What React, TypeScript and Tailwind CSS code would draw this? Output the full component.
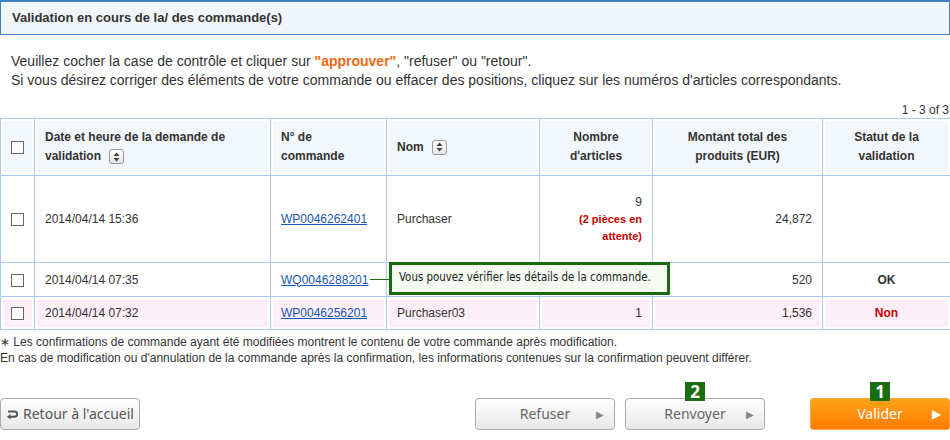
import React from 'react';

const font = { fontFamily: '"Liberation Sans", Arial, sans-serif' };

function Box() {
  return <span className="inline-block w-[13px] h-[13px] border border-[#666] bg-white align-middle" />;
}

function SortIcon() {
  return (
    <span className="inline-flex w-[15px] h-[15px] border border-[#999] rounded-[3px] bg-gradient-to-b from-white to-[#e6e6e6] items-center justify-center align-middle ml-2">
      <svg width="7" height="10" viewBox="0 0 7 10">
        <path d="M3.5 0.5 L6.5 4 L0.5 4 Z" fill="#444" />
        <path d="M3.5 9.5 L6.5 6 L0.5 6 Z" fill="#444" />
      </svg>
    </span>
  );
}

function Badge({ n }: { n: string }) {
  return (
    <span className="absolute -top-[17px] w-[20px] h-[19px] bg-[#1b6e10] text-white text-[17px] font-bold leading-[19px] text-center">
      {n}
    </span>
  );
}

const th = 'border border-[#a9cbec] bg-[#f2f7fb] shadow-[inset_0_0_0_2px_#fff] text-[12px] font-bold text-[#333] leading-[19px]';
const td = 'border border-[#a9cbec] text-[12px] text-[#333]';
const tdPink = 'border border-[#a9cbec] bg-[#fcefF8] shadow-[inset_0_0_0_2px_#fff] text-[12px] text-[#333]';
const link = 'text-[#1a56b8] underline';

export default function App() {
  return (
    <div className="w-[950px] h-[440px] bg-white relative" style={font}>
      <div className="border border-[#3f80c6] border-t-2 bg-[#f1f6fb] h-[35px] flex items-center px-[11px]">
        <h1 className="text-[13px] font-bold text-[#333]">Validation en cours de la/ des commande(s)</h1>
      </div>

      <div className="px-[11px] pt-[17px] text-[14px] text-[#333] leading-[19px]">
        <p>
          Veuillez cocher la case de contrôle et cliquer sur{' '}
          <span className="font-bold text-[#ee6a10]">"approuver"</span>, "refuser" ou "retour".
        </p>
        <p>Si vous désirez corriger des éléments de votre commande ou effacer des positions, cliquez sur les numéros d'articles correspondants.</p>
      </div>

      <div className="text-right text-[12px] text-[#333] pr-[1px] mt-[13px] leading-[14px]">1 - 3 of 3</div>

      <table className="w-[950px] border-collapse mt-[1px] table-fixed">
        <colgroup>
          <col className="w-[34px]" />
          <col className="w-[236px]" />
          <col className="w-[116px]" />
          <col className="w-[153px]" />
          <col className="w-[113px]" />
          <col className="w-[170px]" />
          <col className="w-[128px]" />
        </colgroup>
        <thead>
          <tr className="h-[57px]">
            <th className={`${th} text-center`}><Box /></th>
            <th className={`${th} text-left px-[10px]`}>
              Date et heure de la demande de validation
              <SortIcon />
            </th>
            <th className={`${th} text-left px-[10px]`}>N° de commande</th>
            <th className={`${th} text-left px-[10px]`}>
              Nom
              <SortIcon />
            </th>
            <th className={`${th} text-center px-[10px]`}>Nombre d'articles</th>
            <th className={`${th} text-center px-[16px]`}>
              Montant total des produits (EUR)
            </th>
            <th className={`${th} text-center px-[10px]`}>Statut de la validation</th>
          </tr>
        </thead>
        <tbody>
          <tr className="h-[87px]">
            <td className={`${td} text-center`}><Box /></td>
            <td className={`${td} px-[10px]`}>2014/04/14 15:36</td>
            <td className={`${td} px-[10px]`}><a className={link}>WP0046262401</a></td>
            <td className={`${td} px-[10px]`}>Purchaser</td>
            <td className={`${td} px-[10px] text-right`}>
              <div className="leading-[17px]">9</div>
              <div className="text-[11px] font-bold text-[#cc0000] leading-[17px]">
                (2 pièces en
                <br />
                attente)
              </div>
            </td>
            <td className={`${td} px-[10px] text-right`}>24,872</td>
            <td className={td}></td>
          </tr>
          <tr className="h-[34px]">
            <td className={`${td} text-center`}><Box /></td>
            <td className={`${td} px-[10px]`}>2014/04/14 07:35</td>
            <td className={`${td} px-[10px]`}>
              <div className="relative">
                <a className={link}>WQ0046288201</a>
                <span className="absolute left-[89px] top-[8px] w-[20px] h-[1px] bg-[#1e6e14]" />
                <div
                  className="absolute left-[108px] -top-[9px] w-[281px] h-[33px] border-[3px] border-[#1a6a10] bg-[#f4fbf1] flex items-center px-[7px] text-[#222] whitespace-nowrap z-10"
                  style={{ fontFamily: '"DejaVu Sans Condensed", "DejaVu Sans", sans-serif', fontSize: '11.4px' }}
                >
                  Vous pouvez vérifier les détails de la commande.
                </div>
              </div>
            </td>
            <td className={td}></td>
            <td className={td}></td>
            <td className={`${td} px-[10px] text-right`}>520</td>
            <td className={`${td} text-center font-bold`}>OK</td>
          </tr>
          <tr className="h-[33px]">
            <td className={`${tdPink} text-center`}><Box /></td>
            <td className={`${tdPink} px-[10px]`}>2014/04/14 07:32</td>
            <td className={`${tdPink} px-[10px]`}><a className={link}>WP0046256201</a></td>
            <td className={`${tdPink} px-[10px]`}>Purchaser03</td>
            <td className={`${tdPink} px-[10px] text-right`}>1</td>
            <td className={`${tdPink} px-[10px] text-right`}>1,536</td>
            <td className={`${tdPink} text-center font-bold text-[#cc0000]`}>Non</td>
          </tr>
        </tbody>
      </table>

      <div className="text-[12px] text-[#333] leading-[16px] mt-[4px]">
        <p>∗ Les confirmations de commande ayant été modifiées montrent le contenu de votre commande après modification.</p>
        <p>En cas de modification ou d'annulation de la commande après la confirmation, les informations contenues sur la confirmation peuvent différer.</p>
      </div>

      <div className="flex items-end mt-[32px] text-[14px]" style={{ fontFamily: '"Noto Sans", sans-serif' }}>
        <button className="w-[140px] h-[32px] rounded-[4px] border border-[#aaa] bg-gradient-to-b from-white to-[#e8e8e8] text-[#555] flex items-center justify-center gap-[4px] leading-none">
          <svg width="13" height="11" viewBox="0 0 13 11">
            <path d="M2 2.5 H8.5 A2.6 2.6 0 0 1 8.5 7.7 H3" stroke="#555" strokeWidth="2" fill="none" />
            <path d="M4.5 5 L1 7.7 L4.5 10.4 Z" fill="#555" />
          </svg>
          Retour à l'accueil
        </button>
        <div className="flex-1" />
        <button className="w-[140px] h-[32px] rounded-[4px] border border-[#aaa] bg-gradient-to-b from-white to-[#e8e8e8] text-[#666] relative flex items-center justify-center leading-none">
          Refuser
          <span className="absolute right-[10px] text-[#888] text-[10px]">▶</span>
        </button>
        <button className="ml-[10px] w-[140px] h-[32px] rounded-[4px] border border-[#aaa] bg-gradient-to-b from-white to-[#e8e8e8] text-[#666] relative flex items-center justify-center leading-none">
          <Badge n="2" />
          Renvoyer
          <span className="absolute right-[10px] text-[#888] text-[10px]">▶</span>
        </button>
        <button className="ml-[45px] w-[140px] h-[32px] rounded-[3px] border border-[#f7a64a] bg-gradient-to-b from-[#ffa21a] to-[#ff7a00] text-white relative flex items-center justify-center leading-none">
          <Badge n="1" />
          Valider
          <span className="absolute right-[8px] text-white text-[12px]">▶</span>
        </button>
      </div>
    </div>
  );
}
